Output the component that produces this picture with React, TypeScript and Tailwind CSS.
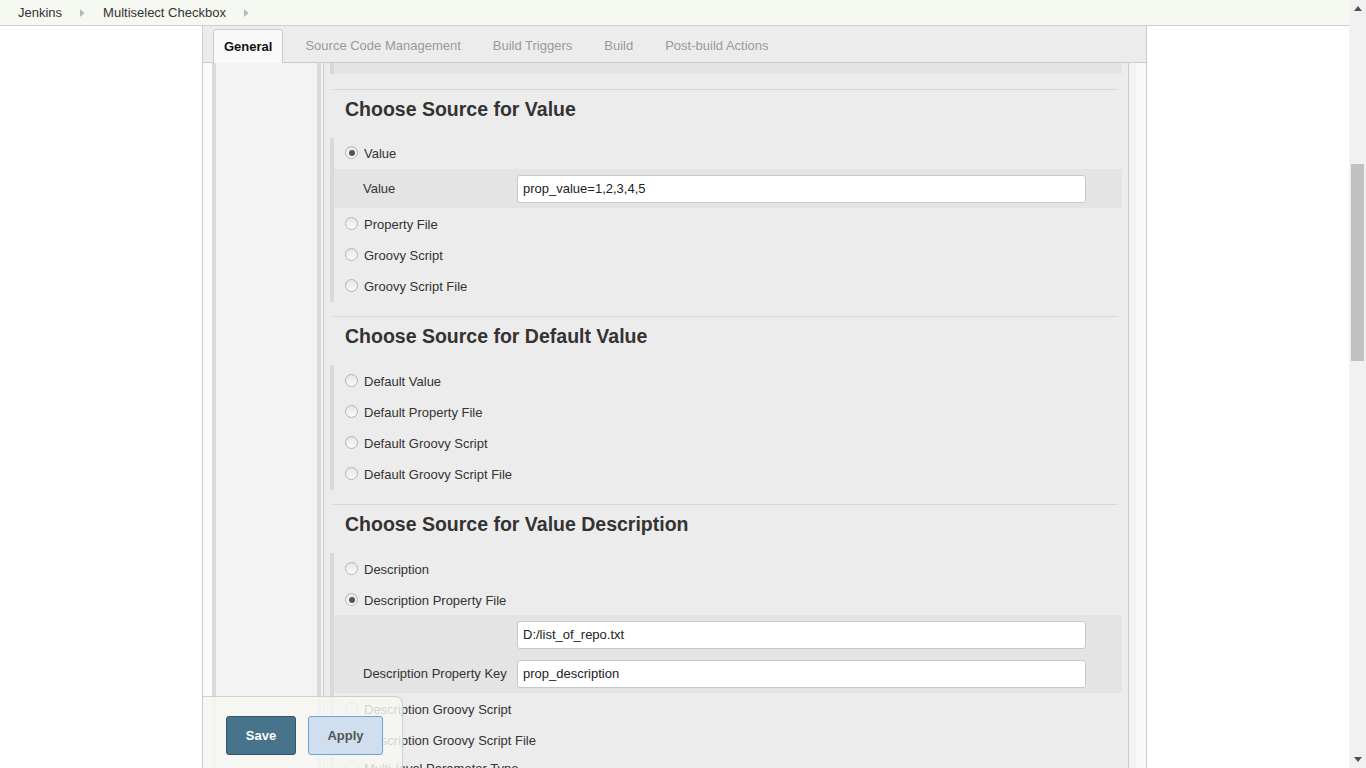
import React from 'react';

const font = "font-['Liberation_Sans',Arial,Helvetica,sans-serif]";

const Crumb = () => (
  <svg width="5" height="8" viewBox="0 0 5 8" className="mx-[18px]">
    <path d="M0 0 L4.5 4 L0 8 Z" fill="#b8b8b8" />
  </svg>
);

const Radio = ({ checked = false }: { checked?: boolean }) => (
  <span className="relative -mt-[2px] flex h-[13px] w-[13px] shrink-0 items-center justify-center rounded-full border border-[#b4b4b4] bg-[linear-gradient(#e6e6e6,#fbfbfb)]">
    {checked && <span className="h-[6px] w-[6px] rounded-full bg-[#555]" />}
  </span>
);

const RadioRow = ({ label, checked }: { label: string; checked?: boolean }) => (
  <div className="flex h-[31px] items-center gap-[6px] pl-[11px]">
    <Radio checked={checked} />
    <span>{label}</span>
  </div>
);

const Field = ({ label, value }: { label: string; value: string }) => (
  <div className="flex h-[39px] items-center pl-[29px]">
    <span className="w-[154px] shrink-0">{label}</span>
    <div className="flex h-[28px] w-[569px] items-center rounded-[3px] border border-[#c8c8c8] bg-white px-[5px] text-[#222]">
      {value}
    </div>
  </div>
);

const Section = ({
  title,
  children,
  nudge = false,
}: {
  title: string;
  children: React.ReactNode;
  nudge?: boolean;
}) => (
  <div>
    <div className="mr-[5px] ml-[3px] border-t border-[#d6d6d6]" />
    <h3 className="mt-[8px] mb-[18px] pl-[15px] text-[19.5px] leading-[22px] font-bold text-[#333]">{title}</h3>
    <div className={nudge ? 'border-l-4 border-[#d9d9d9] pt-[1px]' : 'border-l-4 border-[#d9d9d9]'}>{children}</div>
  </div>
);

const tabs = ['Source Code Management', 'Build Triggers', 'Build', 'Post-build Actions'];

export default function App() {
  return (
    <div className={`${font} flex h-[768px] w-full overflow-hidden bg-white text-[13px] text-[#333]`}>
      <div className="relative flex min-w-0 flex-1 flex-col">
        <div className="flex h-[26px] shrink-0 items-center border-b border-[#cfcfcf] bg-[#f6f8f2] pl-[18px]">
          <span>Jenkins</span>
          <Crumb />
          <span>Multiselect Checkbox</span>
          <Crumb />
        </div>

        <div className="mx-auto flex w-[945px] flex-1 flex-col border-x border-[#cccccc]">
          <div className="flex h-[37px] shrink-0 items-end gap-[12px] border-b border-[#cccccc] bg-[#ececec] pl-[10px]">
            <div className="-mb-px flex h-[34px] items-center rounded-t-[4px] border border-b-0 border-[#cccccc] bg-[#f9f9f9] px-[10px] font-bold text-[#111]">
              General
            </div>
            {tabs.map((t) => (
              <div key={t} className="flex h-[33px] items-center px-[10px] text-[#9a9a9a] first:-ml-px">
                {t}
              </div>
            ))}
          </div>

          <div className="flex flex-1">
            <div className="flex shrink-0 border-r border-[#cccccc]">
              <div className="w-[9px] bg-[#fafafa]" />
              <div className="w-[4px] bg-[#dadada]" />
              <div className="w-[101px] bg-[#f3f3f3]" />
              <div className="w-[4px] bg-[#dadada]" />
              <div className="w-[2px] bg-[#f3f3f3]" />
            </div>

            <div className="w-[804px] shrink-0 bg-[#ececec] px-[6px]">
              <div className="h-[11px] border-l-4 border-[#d7d7d7] bg-[#e4e4e4]" />
              <div className="h-[15px]" />

              <Section title="Choose Source for Value">
                <RadioRow label="Value" checked />
                <div className="bg-[#e4e4e4]">
                  <Field label="Value" value="prop_value=1,2,3,4,5" />
                </div>
                <div className="h-[1px]" />
                <RadioRow label="Property File" />
                <RadioRow label="Groovy Script" />
                <RadioRow label="Groovy Script File" />
              </Section>
              <div className="h-[14px]" />

              <Section title="Choose Source for Default Value" nudge>
                <RadioRow label="Default Value" />
                <RadioRow label="Default Property File" />
                <RadioRow label="Default Groovy Script" />
                <RadioRow label="Default Groovy Script File" />
              </Section>
              <div className="h-[14px]" />

              <Section title="Choose Source for Value Description" nudge>
                <RadioRow label="Description" />
                <RadioRow label="Description Property File" checked />
                <div className="-mt-px bg-[#e4e4e4]">
                  <Field label="" value="D:/list_of_repo.txt" />
                  <Field label="Description Property Key" value="prop_description" />
                </div>
                <div className="h-[1px]" />
                <RadioRow label="Description Groovy Script" />
                <RadioRow label="Description Groovy Script File" />
                <div className="-mt-[3px]">
                  <RadioRow label="Multi-level Parameter Type" />
                </div>
              </Section>
            </div>

            <div className="flex border-l border-[#cccccc]">
              <div className="w-[7px] bg-[#f3f3f3]" />
              <div className="w-[10px] bg-[#f8f8f8]" />
            </div>
          </div>
        </div>

        <div className="absolute bottom-0 left-[203px] flex h-[72px] w-[200px] items-start gap-[12px] rounded-tr-[8px] border border-b-0 border-l-0 border-[#c2d8c2] bg-[rgba(246,248,242,0.82)] pt-[19px] pl-[23px]">
          <button className="h-[39px] w-[70px] rounded-[3px] border border-[#2f5566] bg-[#47748a] font-bold text-white">
            Save
          </button>
          <button className="h-[39px] w-[75px] rounded-[3px] border border-[#6fa3da] bg-[#cfdff0] font-bold text-[#555]">
            Apply
          </button>
        </div>
      </div>

      <div className="flex w-[17px] shrink-0 flex-col bg-[#f1f1f1]">
        <div className="flex h-[17px] items-center justify-center">
          <svg width="8" height="5" viewBox="0 0 8 5">
            <path d="M0 5 L4 0 L8 5 Z" fill="#505050" />
          </svg>
        </div>
        <div className="flex-1">
          <div className="mx-[2px] mt-[147px] h-[197px] bg-[#c1c1c1]" />
        </div>
        <div className="flex h-[17px] items-center justify-center">
          <svg width="8" height="5" viewBox="0 0 8 5">
            <path d="M0 0 L8 0 L4 5 Z" fill="#505050" />
          </svg>
        </div>
      </div>
    </div>
  );
}
